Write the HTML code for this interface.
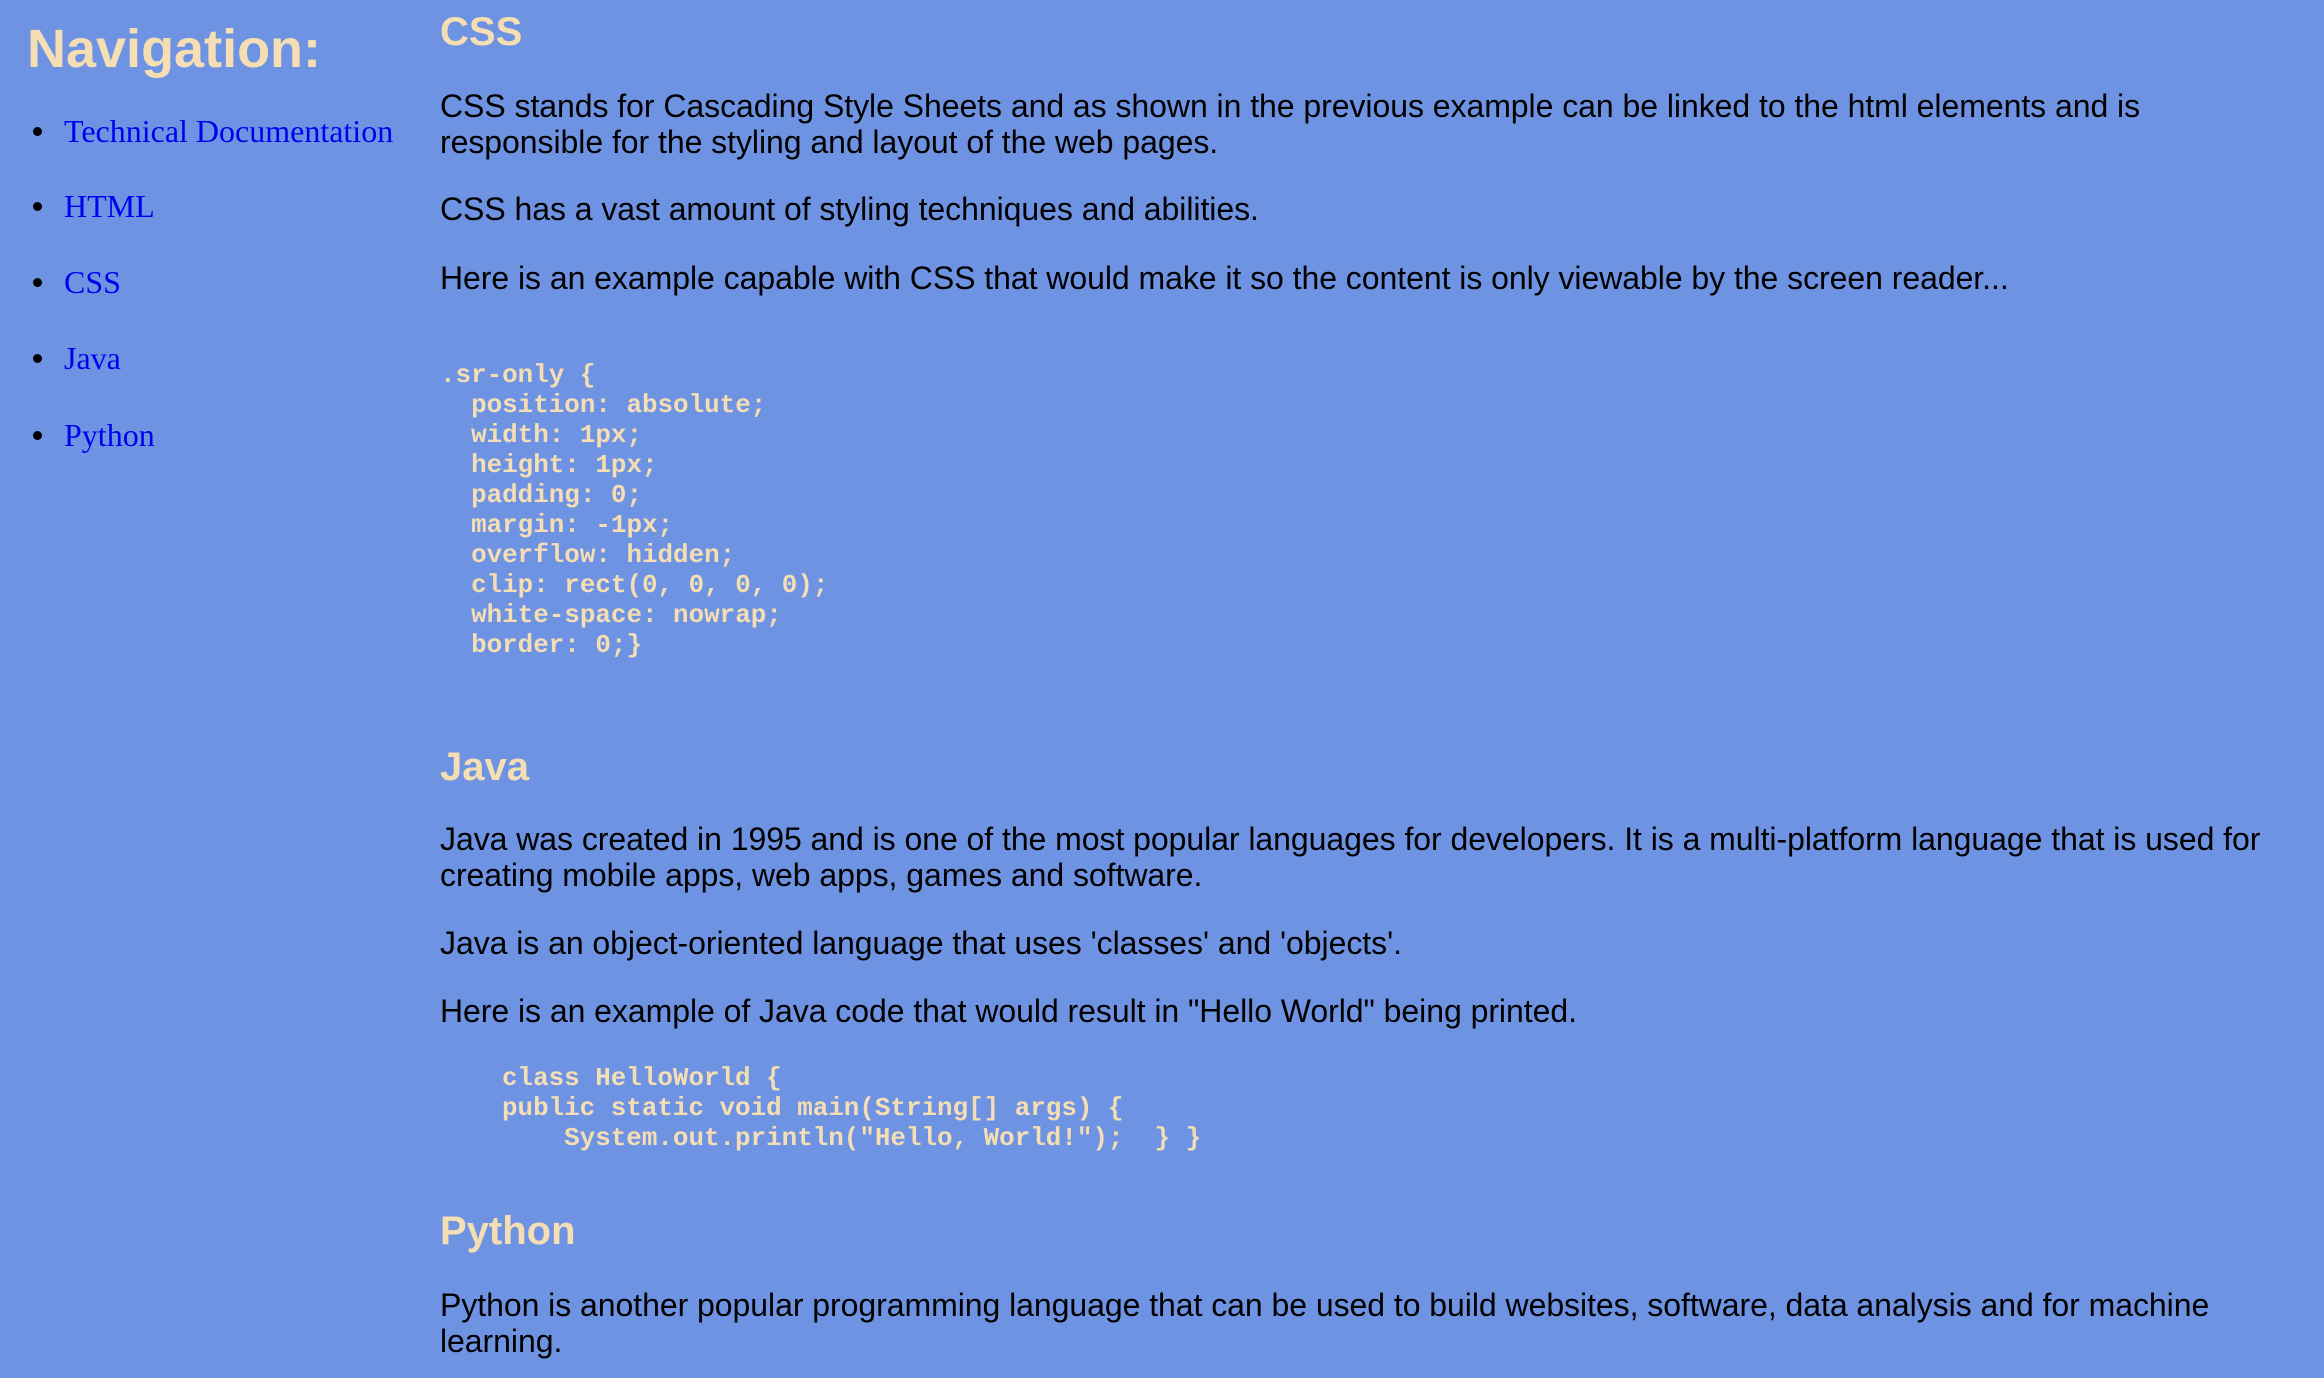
<!DOCTYPE html>
<html><head><meta charset="utf-8"><style>
html,body{margin:0;padding:0;}
body{width:2324px;height:1378px;background:#6f93e3;position:relative;overflow:hidden;font-family:"Liberation Sans",Arial,sans-serif;color:#000;}
.a{position:absolute;white-space:nowrap;}
h1,h2{margin:0;color:#f5deb3;font-weight:bold;}
.nav{font-family:"Liberation Serif",serif;font-size:32px;color:#0000ee;line-height:40px;}
.bul{position:absolute;width:9px;height:9px;border-radius:50%;background:#000;}
.p{font-size:32px;line-height:36px;letter-spacing:-0.05px;}
.c{font-family:"Liberation Mono",monospace;font-weight:bold;font-size:25.9px;line-height:30px;color:#f5deb3;white-space:pre;}
</style></head><body>
<h1 class="a" style="left:27px;top:19px;font-size:54px;line-height:60px;">Navigation:</h1>

<div class="bul" style="left:33px;top:127px"></div><div class="a nav" style="left:64px;top:111px">Technical Documentation</div>
<div class="bul" style="left:33px;top:202px"></div><div class="a nav" style="left:64px;top:186px">HTML</div>
<div class="bul" style="left:33px;top:278px"></div><div class="a nav" style="left:64px;top:262px">CSS</div>
<div class="bul" style="left:33px;top:354px"></div><div class="a nav" style="left:64px;top:338px">Java</div>
<div class="bul" style="left:33px;top:431px"></div><div class="a nav" style="left:64px;top:415px">Python</div>

<h2 class="a" style="left:440px;top:9px;font-size:40px;line-height:46px;">CSS</h2>
<div class="a p" style="left:440px;top:88px">CSS stands for Cascading Style Sheets and as shown in the previous example can be linked to the html elements and is<br>responsible for the styling and layout of the web pages.</div>
<div class="a p" style="left:440px;top:191px">CSS has a vast amount of styling techniques and abilities.</div>
<div class="a p" style="left:440px;top:260px">Here is an example capable with CSS that would make it so the content is only viewable by the screen reader...</div>
<div class="a c" style="left:440px;top:360px">.sr-only {
  position: absolute;
  width: 1px;
  height: 1px;
  padding: 0;
  margin: -1px;
  overflow: hidden;
  clip: rect(0, 0, 0, 0);
  white-space: nowrap;
  border: 0;}</div>

<h2 class="a" style="left:440px;top:744px;font-size:40px;line-height:46px;">Java</h2>
<div class="a p" style="left:440px;top:821px">Java was created in 1995 and is one of the most popular languages for developers. It is a multi-platform language that is used for<br>creating mobile apps, web apps, games and software.</div>
<div class="a p" style="left:440px;top:925px">Java is an object-oriented language that uses 'classes' and 'objects'.</div>
<div class="a p" style="left:440px;top:993px">Here is an example of Java code that would result in "Hello World" being printed.</div>
<div class="a c" style="left:502px;top:1063px">class HelloWorld {
public static void main(String[] args) {
    System.out.println("Hello, World!");  } }</div>

<h2 class="a" style="left:440px;top:1208px;font-size:40px;line-height:46px;">Python</h2>
<div class="a p" style="left:440px;top:1287px">Python is another popular programming language that can be used to build websites, software, data analysis and for machine<br>learning.</div>
</body></html>
